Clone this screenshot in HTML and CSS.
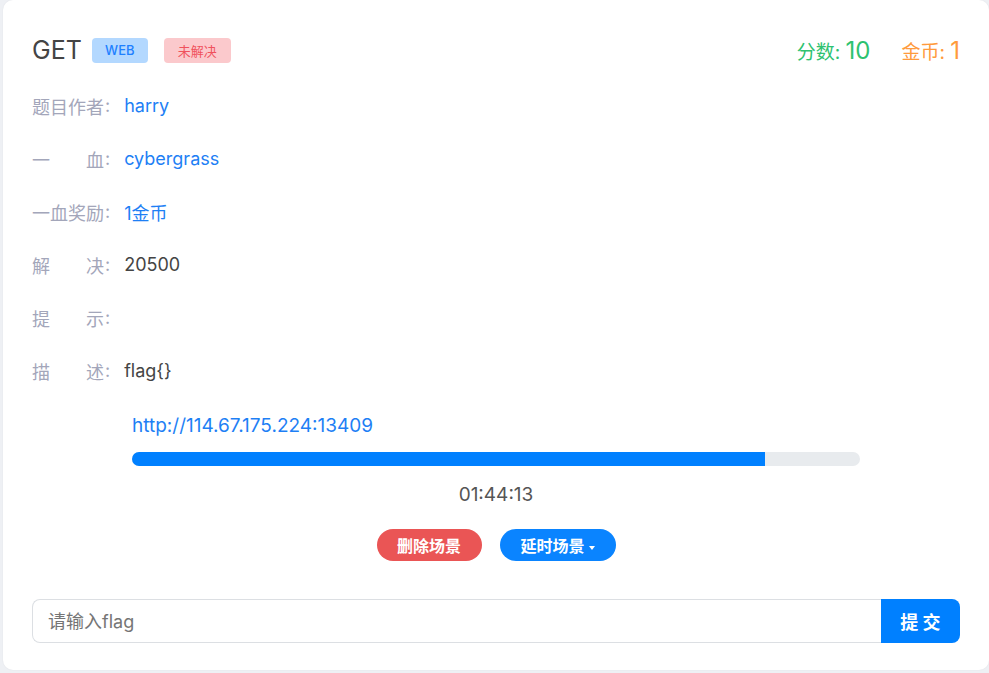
FILE: index.html
```html
<!DOCTYPE html>
<html>
  <head>
    <meta charset="utf-8">
    <link rel="stylesheet" href="styles.css">
  </head>
  <body>
    <div class="card">
      <div class="head">
        <div class="title">
          <span class="name">GET</span>
          <span class="tag tag-web">WEB</span>
          <span class="tag tag-todo">未解决</span>
        </div>
        <div class="score">
          <span class="green">分数: <b>10</b></span>
          <span class="orange">金币: <b>1</b></span>
        </div>
      </div>

      <div class="row"><span class="label">题目作者</span><span class="colon">:</span><span class="val blue">harry</span></div>
      <div class="row"><span class="label">一血</span><span class="colon">:</span><span class="val blue">cybergrass</span></div>
      <div class="row"><span class="label">一血奖励</span><span class="colon">:</span><span class="val blue">1金币</span></div>
      <div class="row"><span class="label">解决</span><span class="colon">:</span><span class="val">20500</span></div>
      <div class="row"><span class="label">提示</span><span class="colon">:</span><span class="val"></span></div>
      <div class="row"><span class="label">描述</span><span class="colon">:</span><span class="val">flag{}</span></div>

      <div class="scene">
        <a class="link" href="#">http://114.67.175.224:13409</a>
        <div class="progress"><div class="bar" style="width: 87%"></div></div>
        <div class="time">01:44:13</div>
        <div class="btns">
          <button class="pill red">删除场景</button>
          <button class="pill blue-bg">延时场景<span class="caret"></span></button>
        </div>
      </div>

      <form class="flag">
        <input type="text" placeholder="请输入flag">
        <button type="submit">提 交</button>
      </form>
    </div>
  </body>
</html>
```

FILE: styles.css
```css
body {
  margin: 0;
  background: #eef0f4;
  font-family: Inter, "Noto Sans CJK SC", sans-serif;
  height: 673px;
  overflow: hidden;
}

.card {
  background: #fff;
  margin-left: 3px;
  width: 928px;
  height: 642px;
  padding: 28px 29px 0 29px;
  border-radius: 10px;
  box-shadow: 0 0 2px rgba(0, 0, 0, 0.06);
}

.head {
  display: flex;
  justify-content: space-between;
  align-items: center;
  height: 44px;
  margin-bottom: 7px;
}

.title {
  display: flex;
  align-items: center;
}

.name {
  font-size: 25px;
  color: #444;
  margin-right: 10px;
}

.tag {
  display: inline-flex;
  align-items: center;
  justify-content: center;
  height: 25px;
  border-radius: 4px;
  font-size: 13px;
}

.tag-web {
  width: 56px;
  background: #b3d8ff;
  color: #1e80ff;
  font-weight: 500;
  margin-right: 16px;
}

.tag-todo {
  width: 67px;
  background: #fbc9cc;
  color: #f0525c;
}

.score {
  display: flex;
  gap: 31px;
  font-size: 19px;
  align-items: baseline;
}

.score b {
  font-weight: normal;
  font-size: 24px;
}

.green { color: #2ec26f; }
.orange { color: #ff9a3c; }

.row {
  display: flex;
  align-items: center;
  height: 53px;
  font-size: 18px;
}

.label {
  width: 72px;
  color: #a3a6ba;
  text-align: justify;
  text-align-last: justify;
}

.colon {
  color: #a3a6ba;
  margin-left: 1px;
}

.val {
  margin-left: 14px;
  color: #444;
}

.blue { color: #1e7ff5; }

.scene {
  margin: 16px 100px 0 100px;
  display: flex;
  flex-direction: column;
}

.link {
  color: #1e7ff5;
  text-decoration: none;
  font-size: 19px;
  line-height: 26px;
}

.progress {
  margin-top: 13px;
  height: 14px;
  background: #e8ebee;
  border-radius: 7px;
  overflow: hidden;
}

.bar {
  height: 100%;
  background: #0080ff;
}

.time {
  text-align: center;
  color: #555;
  font-size: 19px;
  margin-top: 17px;
}

.btns {
  display: flex;
  justify-content: center;
  gap: 18px;
  margin-top: 23px;
}

.pill {
  height: 32px;
  border: none;
  border-radius: 16px;
  color: #fff;
  font-family: inherit;
  font-size: 16px;
  font-weight: bold;
  padding: 0;
}

.red {
  background: #ea5555;
  width: 105px;
}

.blue-bg {
  background: #0a84ff;
  width: 116px;
}

.caret {
  display: inline-block;
  width: 0;
  height: 0;
  border-left: 3.5px solid transparent;
  border-right: 3.5px solid transparent;
  border-top: 4px solid #fff;
  vertical-align: middle;
  margin-left: 4px;
}

.flag {
  display: flex;
  margin-top: 38px;
  height: 44px;
}

.flag input {
  flex: 1;
  border: 1px solid #dcdfe3;
  border-right: none;
  border-radius: 8px 0 0 8px;
  padding: 0 15px;
  font-family: inherit;
  font-size: 18px;
  color: #444;
  outline: none;
}

.flag input::placeholder {
  color: #757575;
}

.flag button {
  width: 79px;
  border: none;
  border-radius: 0 8px 8px 0;
  background: #0080ff;
  color: #fff;
  font-family: inherit;
  font-size: 18px;
  font-weight: bold;
}
```
